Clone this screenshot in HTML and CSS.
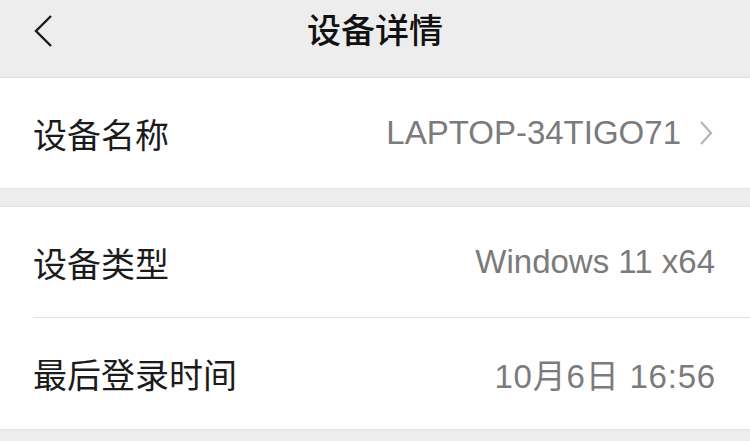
FILE: index.html
```html
<!DOCTYPE html>
<html lang="zh-CN">
<head>
<meta charset="utf-8">
<title>设备详情</title>
<link rel="stylesheet" href="styles.css">
</head>
<body>
<div class="page">
  <header class="nav">
    <span class="back">
      <svg width="20" height="34" viewBox="0 0 20 34"><polyline points="17,2 2,17 17,32" fill="none" stroke="#1a1a1a" stroke-width="2.4" stroke-linejoin="miter"/></svg>
    </span>
    <h1 class="title">设备详情</h1>
  </header>
  <section class="card">
    <div class="row">
      <span class="label">设备名称</span>
      <span class="value">LAPTOP-34TIGO71
        <svg class="chev" width="14" height="26" viewBox="0 0 14 26"><polyline points="2,2 12,13 2,24" fill="none" stroke="#b5b5b5" stroke-width="2.2"/></svg>
      </span>
    </div>
  </section>
  <div class="gap"></div>
  <section class="card">
    <div class="row">
      <span class="label">设备类型</span>
      <span class="value">Windows 11 x64</span>
    </div>
    <div class="row sep">
      <span class="label">最后登录时间</span>
      <span class="value date">10月6日 16:56</span>
    </div>
  </section>
  <div class="rest"></div>
</div>
</body>
</html>
```
FILE: styles.css
```css
html, body {
  margin: 0;
  padding: 0;
  background: #ededed;
}
.page {
  width: 750px;
  height: 441px;
  overflow: hidden;
  font-family: "Liberation Sans", "Noto Sans CJK SC", sans-serif;
  background: #ededed;
}
.nav {
  height: 77px;
  border-bottom: 1px solid #dedede;
  display: flex;
  align-items: center;
  justify-content: center;
  position: relative;
}
.back {
  position: absolute;
  left: 34px;
  top: 14px;
  display: flex;
}
.title {
  margin: 0;
  font-family: "Noto Sans CJK SC", sans-serif;
  font-size: 34px;
  font-weight: 500;
  color: #111;
  margin-top: -20px;
}
.card {
  background: #fff;
}
.row {
  height: 110px;
  margin-left: 33px;
  padding-right: 35px;
  display: flex;
  align-items: center;
  justify-content: space-between;
}
.row.sep {
  border-top: 1px solid #e3e3e3;
  height: 111px;
}
.label {
  font-family: "Noto Sans CJK SC", sans-serif;
  font-size: 34px;
  color: #1b1b1b;
}
.value {
  font-size: 33px;
  color: #7b7b7b;
  display: flex;
  align-items: center;
  gap: 18px;
}
.value.date {
  letter-spacing: 0.8px;
  margin-right: -1px;
}
.chev {
  margin-right: 2px;
}
.gap {
  height: 17px;
  border-top: 1px solid #e3e3e3;
  border-bottom: 1px solid #e3e3e3;
}
.rest {
  border-top: 1px solid #e3e3e3;
}
```
